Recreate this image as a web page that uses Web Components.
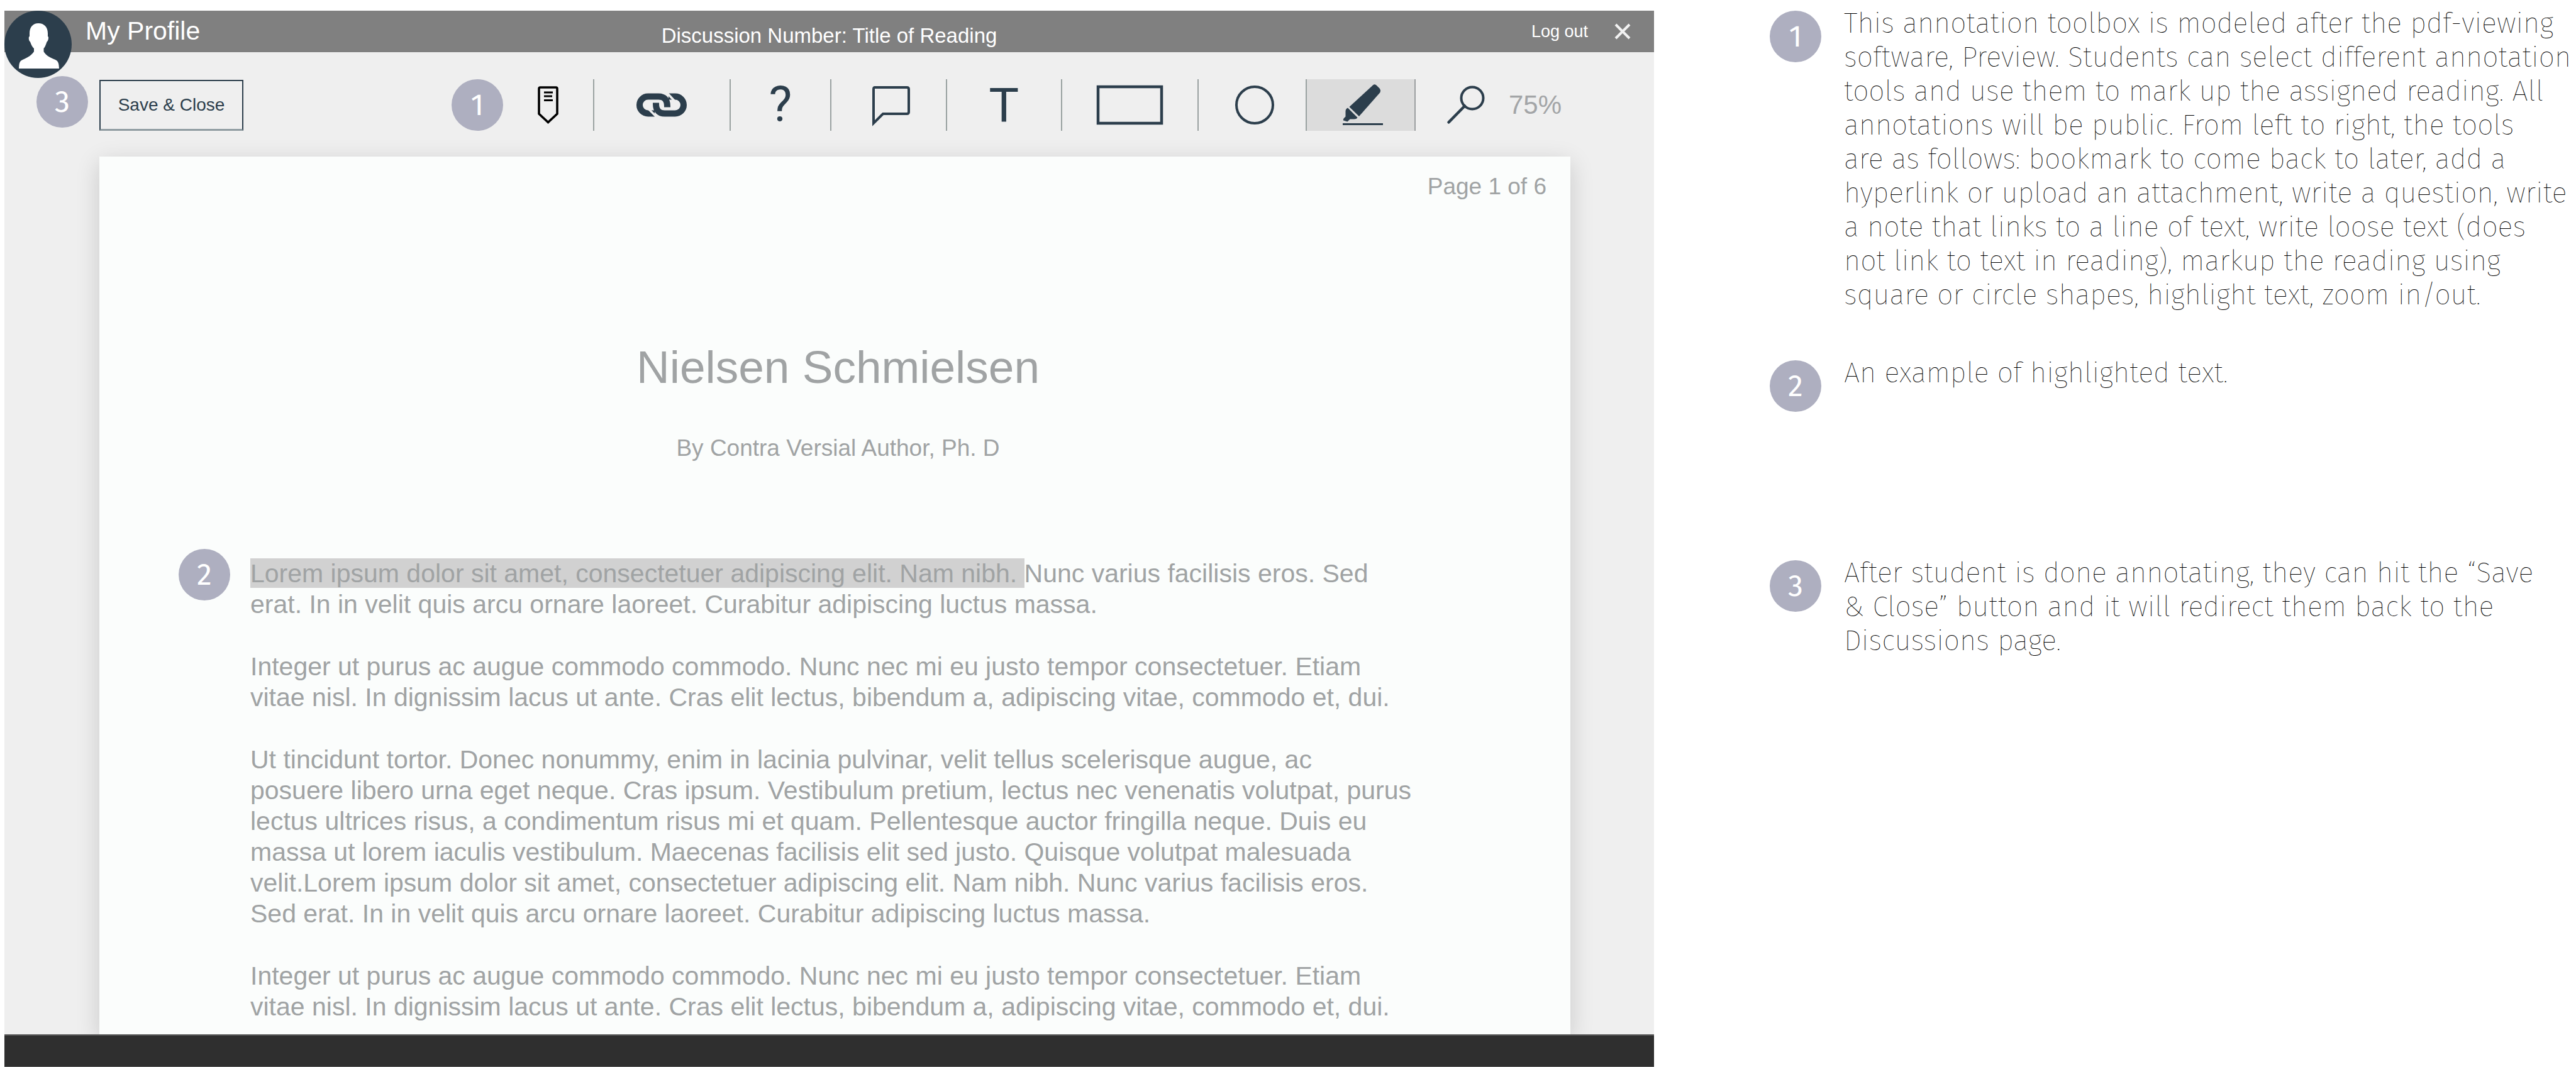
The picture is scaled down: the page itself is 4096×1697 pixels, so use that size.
<!DOCTYPE html>
<html lang="en">
<head>
<meta charset="utf-8">
<title>Reading annotation</title>
<style>
  html, body { margin: 0; height: 100%; }
  body { background: #fff; font-family: "Liberation Sans", Arial, sans-serif; overflow-x: hidden; }
</style>
</head>
<body>
<wire-frame>
  <reader-app>
    <top-bar slot="top"></top-bar>
    <tool-row slot="tools"></tool-row>
    <reading-page slot="page"></reading-page>
  </reader-app>
  <notes-panel slot="notes">
    <side-note number="1">This annotation toolbox is modeled after the pdf-viewing<br>software, Preview. Students can select different annotation<br>tools and use them to mark up the assigned reading. All<br>annotations will be public. From left to right, the tools<br>are as follows: bookmark to come back to later, add a<br>hyperlink or upload an attachment, write a question, write<br>a note that links to a line of text, write loose text (does<br>not link to text in reading), markup the reading using<br>square or circle shapes, highlight text, zoom in/out.</side-note>
    <side-note number="2">An example of highlighted text.</side-note>
    <side-note number="3">After student is done annotating, they can hit the “Save<br>&amp; Close” button and it will redirect them back to the<br>Discussions page.</side-note>
  </notes-panel>
</wire-frame>

<script>
const define = (name, markup) => {
  const t = document.createElement('template');
  t.innerHTML = markup;
  customElements.define(name, class extends HTMLElement {
    constructor() {
      super();
      this.attachShadow({ mode: 'open' }).append(t.content.cloneNode(true));
    }
  });
};

define('wire-frame', `
  <style>
    :host { display: grid; grid-template-columns: 2623fr 1466fr; min-height: 100vh; box-sizing: border-box; padding: 10px 0 0 7px; }
  </style>
  <slot></slot><slot name="notes"></slot>`);

define('reader-app', `
  <style>
    :host { display: flex; flex-direction: column; margin-top: 7px; background: #efefef; position: relative; min-width: 0; }
    main { flex: 1; display: flex; flex-direction: column; overflow: hidden; }
    footer { height: 52px; box-sizing: border-box; background: #2f2f2f; border-top: 2px solid #5c5c5c; border-bottom: 1px solid #5c5c5c; }
  </style>
  <slot name="top"></slot>
  <main><slot name="tools"></slot><slot name="page"></slot></main>
  <footer></footer>`);

define('num-badge', `
  <style>
    :host { display: flex; align-items: center; justify-content: center; flex: none; width: 82px; height: 82px; border-radius: 50%;
      background: #aeafc0; color: #fff; font: 400 48px/58px "Fira Sans", "Noto Sans", sans-serif; }
  </style>
  <slot></slot>`);

define('top-bar', `
  <style>
    :host { display: grid; grid-template-columns: 1fr auto 1fr; align-items: center; position: relative; height: 66px; box-sizing: border-box;
      background: #808080; color: #fff; }
    a { color: inherit; text-decoration: none; }
    .avatar { position: absolute; left: 0; top: 0; width: 107px; height: 107px; z-index: 1; }
    .avatar svg { display: block; width: 100%; height: 100%; }
    .profile { font-size: 41px; line-height: 48px; padding: 0 0 2px 129px; }
    h1 { margin: 0; font-weight: 400; font-size: 33px; line-height: 40px; padding-top: 14px; }
    .right { display: flex; justify-content: flex-end; align-items: center; gap: 42px; padding-right: 37px; font-size: 27px; line-height: 32px; }
    button { border: 0; padding: 0; background: none; width: 26px; height: 26px; }
    button svg { display: block; }
  </style>
  <a class="avatar" href="#profile" aria-label="Profile picture">
    <svg viewBox="0 0 107 107"><circle cx="53.500" cy="53.500" r="53.500" fill="#2c3e4c"/>
      <path fill="#fff" d="M54 20C63 20 69 26 69 36V41C71 41 70 48 67.500 49.500C66 54 64.500 58 62.500 60V65C65 70 71 74 81 78C86 80.500 86.500 84 87 92H23C23.500 84 23.500 80.500 29 78C38 74 44 70 47 65V60C44.500 58 42.500 54 41 49.500C38.500 48 38 41 40 41V36C40 26 45.500 20 54 20Z"/></svg>
  </a>
  <a class="profile" href="#profile">My Profile</a>
  <h1>Discussion Number: Title of Reading</h1>
  <div class="right"><a href="#logout">Log out</a>
    <button aria-label="Close"><svg width="26" height="26" viewBox="0 0 26 26"><path d="M2 2L24 24M24 2L2 24" stroke="#f2f2f2" stroke-width="4"/></svg></button></div>`);

define('tool-cell', `
  <style>
    :host { display: flex; width: var(--w); height: 82px; box-sizing: border-box; border-right: 2px solid #9aa2a1; }
    :host([inset]) { padding-left: 8px; }
    :host([active]) { background: #dcdcdc; border-color: #9c9fa1; }
    button { flex: 1; display: flex; align-items: center; justify-content: center; padding: 0; border: 0; background: none;
      color: #2c3e4c; font: 78px/82px var(--face, "Liberation Sans"), Arial, sans-serif; }
  </style>
  <button><slot></slot></button>`);

define('tool-row', `
  <style>
    :host { display: flex; align-items: center; height: 166px; box-sizing: border-box; padding: 2px 147px 0 151px; position: relative; flex: none; color: #2c3e4c; }
    .save { width: 229px; height: 81px; border: 2px solid #2c3e4c; border-bottom: 3px solid #8f9ba1; background: none; padding: 0; color: #2c3e4c;
      font: 28px/34px "Liberation Sans", Arial, sans-serif; }
    .save-mark { position: absolute; left: 51px; top: 38px; }
    .tools { display: flex; align-items: center; margin-left: auto; }
    .zoom { display: flex; align-items: center; gap: 38px; margin-left: 50px; }
    .zoom button { border: 0; padding: 0; background: none; }
    output { color: #a3a5a7; font-size: 42px; line-height: 50px; }
    svg { display: block; overflow: visible; }
  </style>
  <num-badge class="save-mark">3</num-badge>
  <button class="save">Save &amp; Close</button>
  <nav class="tools" aria-label="Annotation tools">
    <num-badge>1</num-badge>
    <tool-cell style="--w:145px" aria-label="Bookmark">
      <svg width="33" height="60" viewBox="0 0 33 60" fill="none" stroke="#000"><path d="M4 2H29Q31 2 31 4V44L16.500 57.500L2 44V4Q2 2 4 2Z" stroke-width="3.600"/><path d="M10 10H24M10 16H23M10 22.500H24" stroke-width="3"/></svg>
    </tool-cell>
    <tool-cell style="--w:217px" aria-label="Link">
      <svg width="80" height="38" viewBox="0 0 80 38"><g fill="none" stroke="#2c3e4c" stroke-width="10"><path d="M29 32.500H18.500A13.500 13.500 0 0 1 18.500 5.500H35Q49 5.500 49 21V22.500"/><path d="M51 5.500H61.500A13.500 13.500 0 0 1 61.500 32.500H45Q31 32.500 31 17V15.500"/></g>
        <path d="M47 -2L60 12M20 26L34 40" stroke="#efefef" stroke-width="3.500"/></svg>
    </tool-cell>
    <tool-cell style="--w:160px; --face:Roboto">?</tool-cell>
    <tool-cell inset style="--w:184px" aria-label="Comment">
      <svg width="61" height="63" viewBox="0 0 61 63"><path d="M5 3H56Q59 3 59 6V42Q59 45 56 45H18L3 60V6Q3 3 5 3Z" fill="none" stroke="#2c3e4c" stroke-width="4"/></svg>
    </tool-cell>
    <tool-cell style="--w:183px">T</tool-cell>
    <tool-cell style="--w:217px" aria-label="Rectangle">
      <svg width="105" height="62" viewBox="0 0 105 62"><rect x="2" y="2" width="101" height="58" fill="none" stroke="#2c3e4c" stroke-width="4.500"/></svg>
    </tool-cell>
    <tool-cell inset style="--w:172px" aria-label="Circle">
      <svg width="62" height="62" viewBox="0 0 62 62"><circle cx="31" cy="31" r="29" fill="none" stroke="#2c3e4c" stroke-width="4"/></svg>
    </tool-cell>
    <tool-cell inset style="--w:173px" active aria-label="Highlight">
      <svg width="64" height="66" viewBox="0 0 64 66" fill="#2c3e4c"><path d="M48 1.500Q51 -1 54 2L59 7Q61 10 59.500 13L26 51L10.500 36Z"/><path d="M8 37.500L23.500 53Q22 55.500 18 55.500H11.500L7.500 59.500L1 57.500Q0 55 4.500 51.500V43Q4.500 39 8 37.500Z"/><rect y="62" width="64" height="3"/></svg>
    </tool-cell>
  </nav>
  <div class="zoom">
    <button aria-label="Zoom"><svg width="60" height="60" viewBox="0 0 60 60" fill="none" stroke="#2c3e4c"><circle cx="40" cy="19" r="17.500" stroke-width="4"/><path d="M28 31.500L2.500 57.500" stroke-width="4.500" stroke-linecap="round"/></svg></button>
    <output>75%</output>
  </div>`);

define('reading-page', `
  <style>
    :host { display: block; flex: 1; position: relative; box-sizing: border-box; margin: 0 133px 0 151px; padding: 26px 38px 16px; background: #fbfdfc; color: #a0a3a4;
      box-shadow: 0 10px 36px rgba(0,0,0,.16); }
    .count { margin: 0; text-align: right; font-size: 37px; line-height: 44px; }
    header { padding: 221px 0 153px 10px; text-align: center; }
    h2 { margin: 0; font-weight: 400; font-size: 73px; line-height: 88px; }
    .by { margin: 63px 0 0; font-size: 37px; line-height: 44px; }
    .body { padding-left: 202px; }
    .body p { margin: 0 0 50px; font-size: 41px; line-height: 49px; white-space: nowrap; }
    .body p:last-child { margin-bottom: 0; }
    mark { background: #d1d1d1; color: inherit; padding: 1px 0 0; white-space: pre; }
    num-badge { position: absolute; left: 126px; top: 624px; }
  </style>
  <p class="count">Page 1 of 6</p>
  <header>
    <h2>Nielsen Schmielsen</h2>
    <p class="by">By Contra Versial Author, Ph. D</p>
  </header>
  <num-badge>2</num-badge>
  <div class="body">
    <p><mark>Lorem ipsum dolor sit amet, consectetuer adipiscing elit. Nam nibh. </mark>Nunc varius facilisis eros. Sed<br>erat. In in velit quis arcu ornare laoreet. Curabitur adipiscing luctus massa.</p>
    <p>Integer ut purus ac augue commodo commodo. Nunc nec mi eu justo tempor consectetuer. Etiam<br>vitae nisl. In dignissim lacus ut ante. Cras elit lectus, bibendum a, adipiscing vitae, commodo et, dui.</p>
    <p>Ut tincidunt tortor. Donec nonummy, enim in lacinia pulvinar, velit tellus scelerisque augue, ac<br>posuere libero urna eget neque. Cras ipsum. Vestibulum pretium, lectus nec venenatis volutpat, purus<br>lectus ultrices risus, a condimentum risus mi et quam. Pellentesque auctor fringilla neque. Duis eu<br>massa ut lorem iaculis vestibulum. Maecenas facilisis elit sed justo. Quisque volutpat malesuada<br>velit.Lorem ipsum dolor sit amet, consectetuer adipiscing elit. Nam nibh. Nunc varius facilisis eros.<br>Sed erat. In in velit quis arcu ornare laoreet. Curabitur adipiscing luctus massa.</p>
    <p>Integer ut purus ac augue commodo commodo. Nunc nec mi eu justo tempor consectetuer. Etiam<br>vitae nisl. In dignissim lacus ut ante. Cras elit lectus, bibendum a, adipiscing vitae, commodo et, dui.</p>
  </div>`);

define('notes-panel', `
  <style>
    :host { display: flex; flex-direction: column; padding-left: 184px; }
    ::slotted(:nth-child(2)) { margin-top: 70px; }
    ::slotted(:nth-child(3)) { margin-top: 229px; }
  </style>
  <slot></slot>`);

customElements.define('side-note', class extends HTMLElement {
  constructor() {
    super();
    this.attachShadow({ mode: 'open' }).innerHTML = `
      <style>
        :host { display: flex; gap: 36px; align-items: flex-start; }
        num-badge { margin-top: 7px; }
        p { margin: 0; color: #000; font: 100 45px/54px "Fira Sans", "Noto Sans", sans-serif; white-space: nowrap; }
      </style>
      <num-badge>${this.getAttribute('number')}</num-badge>
      <p><slot></slot></p>`;
  }
});
</script>
</body>
</html>
